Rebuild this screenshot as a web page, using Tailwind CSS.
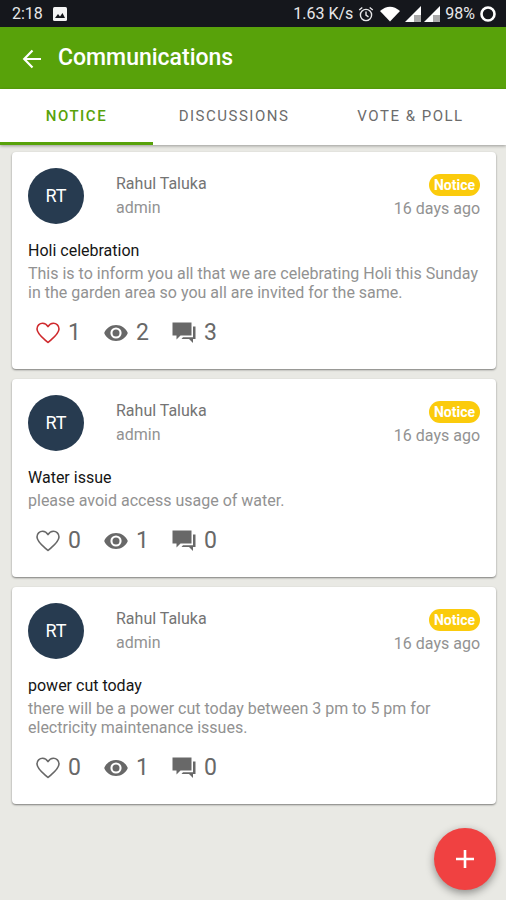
<!DOCTYPE html>
<html lang="en">
<head>
<meta charset="utf-8">
<meta name="viewport" content="width=device-width, initial-scale=1">
<title>Communications</title>
<script src="https://cdn.jsdelivr.net/npm/@tailwindcss/browser@4"></script>
</head>
<body class="min-h-screen bg-[#e9e9e4] font-[Roboto,sans-serif]">
<svg class="hidden" aria-hidden="true">
  <symbol id="heart" viewBox="0 0 24 24"><path d="M12 21.500C8 17.800 1 13 1 7.900 1 4.600 3.500 2.200 6.600 2.200c2.200 0 4.200 1.300 5.400 3.400 1.200-2.100 3.200-3.400 5.400-3.400 3.100 0 5.600 2.400 5.600 5.700C23 13 16 17.800 12 21.500z" fill="none" stroke="currentColor" stroke-width="1.600" stroke-linejoin="round"/></symbol>
  <symbol id="eye" viewBox="0 0 24 24"><path fill="currentColor" d="M12 4C6.600 4 2 7.300.2 12 2 16.700 6.600 20 12 20s10-3.300 11.800-8C22 7.300 17.400 4 12 4zM12 17.600a5.600 5.600 0 1 1 0-11.200 5.600 5.600 0 0 1 0 11.200zM12 8.500a3.500 3.500 0 1 0 0 7 3.500 3.500 0 0 0 0-7z"/></symbol>
  <symbol id="chat" viewBox="0 0 24 24"><path fill="currentColor" d="M0.500 1.500h19v13H8.500l-4 4v-4h-4zM21 5.500h2.500V18H21v4l-4-4H9.500l1.500-1.700h10z"/></symbol>
</svg>

<div class="flex h-[27px] items-center justify-between bg-[#15171c] pl-3 pr-[10px] pt-px text-base text-[#e8e8ea]">
  <div class="flex items-center gap-[10px]">
    <span>2:18</span>
    <svg class="size-[14px]" viewBox="0 0 14 14"><rect width="14" height="14" rx="1.500" fill="#f4f4f4"/><path d="M2 11l3-4 2 2.500L9.500 6 12 11z" fill="#15171c"/></svg>
  </div>
  <div class="flex items-center gap-[5px]">
    <span>1.63 K/s</span>
    <svg class="size-4" viewBox="0 0 16 16" fill="none" stroke="#e8e8ea" stroke-width="1.400"><circle cx="8" cy="9" r="5.600"/><path d="M8 5.500V9.200l2.500 1.600M1.200 4L4.300 1.500M14.800 4L11.700 1.500"/></svg>
    <svg class="ml-px h-4 w-5" viewBox="0 0 20 16"><path d="M0 5Q10-3.500 20 5L10 15.500z" fill="#fff"/></svg>
    <svg class="size-4" viewBox="0 0 16 16"><path d="M0 16L16 0v16z" fill="#fff"/><path d="M9 16V9h7v7z" fill="#aaa"/></svg>
    <svg class="-ml-[2px] size-4" viewBox="0 0 16 16"><path d="M0 16L16 0v16z" fill="#fff"/><path d="M9 16V9h7v7z" fill="#aaa"/></svg>
    <span>98%</span>
    <svg class="size-4" viewBox="0 0 16 16"><circle cx="8" cy="8" r="6.500" fill="none" stroke="#fff" stroke-width="2.600"/></svg>
  </div>
</div>

<header class="flex h-[62px] items-center gap-4 bg-[#58a20a] px-[22px] pt-px text-white">
  <button type="button" aria-label="Back"><svg class="size-5" viewBox="0 0 20 20" fill="none" stroke="currentColor" stroke-width="2.200"><path d="M10.500 1.500L2.200 10l8.300 8.500M2.200 10H19"/></svg></button>
  <h1 class="text-[23px] font-medium">Communications</h1>
</header>

<nav class="relative grid h-14 grid-cols-[153fr_162fr_191fr] bg-white text-[15px] tracking-widest text-[#6c6c6c] shadow-[0_1px_3px_#00000055]">
  <a href="#" aria-current="page" class="flex items-center justify-center border-b-3 border-[#58a20a] pt-[3px] pb-[2px] font-medium text-[#58a20a]">NOTICE</a>
  <a href="#" class="flex items-center justify-center pb-[2px]">DISCUSSIONS</a>
  <a href="#" class="flex items-center justify-center pb-[2px]">VOTE &amp; POLL</a>
</nav>

<main class="flex flex-col gap-[10px] pt-[7px] pr-[10px] pb-24 pl-3">
  <article class="rounded bg-white px-4 pt-4 pb-6 shadow-[0_1px_2px_#00000077]">
    <div class="flex">
      <div class="flex size-14 items-center justify-center rounded-full bg-[#273b50] text-lg text-white">RT</div>
      <div class="ml-8 flex-1 pt-1 text-base leading-6"><p class="text-[#747474]">Rahul Taluka</p><p class="text-[#929292]">admin</p></div>
      <div class="flex flex-col items-end pt-[6px]"><span class="rounded-full bg-[#fbcb0c] px-[5px] text-sm leading-[22px] font-bold text-white">Notice</span><time class="pt-px text-base leading-6 text-[#929292]">16 days ago</time></div>
    </div>
    <h2 class="mt-[17px] text-base leading-5 text-[#151515]">Holi celebration</h2>
    <p class="mt-[3px] text-base leading-[19px] text-[#929292]">This is to inform you all that we are celebrating Holi this Sunday in the garden area so you all are invited for the same.</p>
    <div class="mt-[19px] flex h-6 items-center pl-2 text-[23px] text-[#686868]">
      <button type="button" aria-label="Like" class="flex w-17 items-center gap-2"><svg class="size-6 text-[#cf2a2e]"><use href="#heart"/></svg>1</button>
      <span class="flex w-17 items-center gap-2"><svg class="size-6"><use href="#eye"/></svg>2</span>
      <button type="button" aria-label="Comments" class="flex items-center gap-2"><svg class="size-6"><use href="#chat"/></svg>3</button>
    </div>
  </article>

  <article class="rounded bg-white px-4 pt-4 pb-6 shadow-[0_1px_2px_#00000077]">
    <div class="flex">
      <div class="flex size-14 items-center justify-center rounded-full bg-[#273b50] text-lg text-white">RT</div>
      <div class="ml-8 flex-1 pt-1 text-base leading-6"><p class="text-[#747474]">Rahul Taluka</p><p class="text-[#929292]">admin</p></div>
      <div class="flex flex-col items-end pt-[6px]"><span class="rounded-full bg-[#fbcb0c] px-[5px] text-sm leading-[22px] font-bold text-white">Notice</span><time class="pt-px text-base leading-6 text-[#929292]">16 days ago</time></div>
    </div>
    <h2 class="mt-[17px] text-base leading-5 text-[#151515]">Water issue</h2>
    <p class="mt-[3px] text-base leading-[19px] text-[#929292]">please avoid access usage of water.</p>
    <div class="mt-[19px] flex h-6 items-center pl-2 text-[23px] text-[#686868]">
      <button type="button" aria-label="Like" class="flex w-17 items-center gap-2"><svg class="size-6"><use href="#heart"/></svg>0</button>
      <span class="flex w-17 items-center gap-2"><svg class="size-6"><use href="#eye"/></svg>1</span>
      <button type="button" aria-label="Comments" class="flex items-center gap-2"><svg class="size-6"><use href="#chat"/></svg>0</button>
    </div>
  </article>

  <article class="rounded bg-white px-4 pt-4 pb-6 shadow-[0_1px_2px_#00000077]">
    <div class="flex">
      <div class="flex size-14 items-center justify-center rounded-full bg-[#273b50] text-lg text-white">RT</div>
      <div class="ml-8 flex-1 pt-1 text-base leading-6"><p class="text-[#747474]">Rahul Taluka</p><p class="text-[#929292]">admin</p></div>
      <div class="flex flex-col items-end pt-[6px]"><span class="rounded-full bg-[#fbcb0c] px-[5px] text-sm leading-[22px] font-bold text-white">Notice</span><time class="pt-px text-base leading-6 text-[#929292]">16 days ago</time></div>
    </div>
    <h2 class="mt-[17px] text-base leading-5 text-[#151515]">power cut today</h2>
    <p class="mt-[3px] text-base leading-[19px] text-[#929292]">there will be a power cut today between 3 pm to 5 pm for electricity maintenance issues.</p>
    <div class="mt-[19px] flex h-6 items-center pl-2 text-[23px] text-[#686868]">
      <button type="button" aria-label="Like" class="flex w-17 items-center gap-2"><svg class="size-6"><use href="#heart"/></svg>0</button>
      <span class="flex w-17 items-center gap-2"><svg class="size-6"><use href="#eye"/></svg>1</span>
      <button type="button" aria-label="Comments" class="flex items-center gap-2"><svg class="size-6"><use href="#chat"/></svg>0</button>
    </div>
  </article>
</main>

<button type="button" aria-label="Add" class="fixed right-[10px] bottom-[10px] flex size-[62px] items-center justify-center rounded-full bg-[#f04141] text-white shadow-[0_3px_9px_#00000066]">
  <svg class="size-[18px]" viewBox="0 0 18 18" stroke="currentColor" stroke-width="2.600"><path d="M9 0v18M0 9h18"/></svg>
</button>
</body>
</html>
